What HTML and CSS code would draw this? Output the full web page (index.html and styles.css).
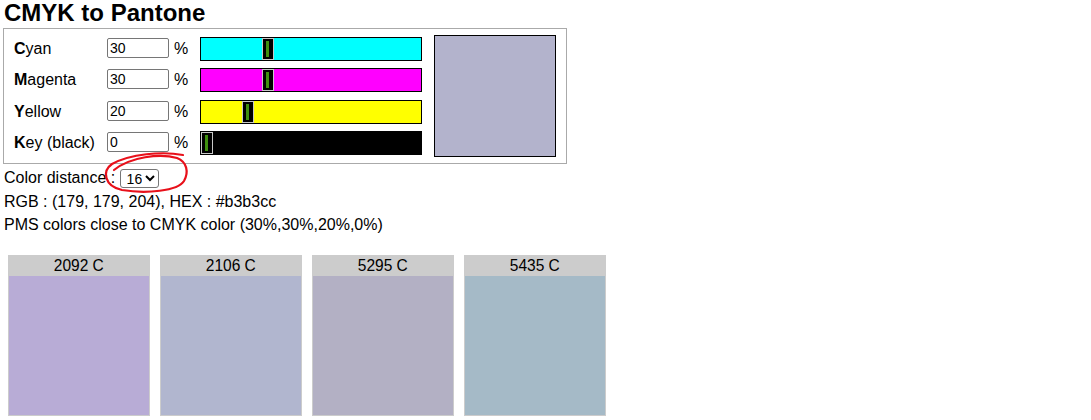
FILE: index.html
```html
<!DOCTYPE html>
<html>
<head>
<meta charset="utf-8">
<title>CMYK to Pantone</title>
<link rel="stylesheet" href="styles.css">
</head>
<body>
<h1 class="title">CMYK to Pantone</h1>
<div class="panel">
  <div class="rows">
    <div class="row">
      <span class="label"><b>C</b>yan</span>
      <input class="num" type="text" value="30">
      <span class="pct">%</span>
      <div class="slider cyan"><div class="thumb" style="left:61px"></div></div>
    </div>
    <div class="row row-wide">
      <span class="label"><b>M</b>agenta</span>
      <input class="num" type="text" value="30">
      <span class="pct">%</span>
      <div class="slider magenta"><div class="thumb" style="left:61px"></div></div>
    </div>
    <div class="row">
      <span class="label"><b>Y</b>ellow</span>
      <input class="num" type="text" value="20">
      <span class="pct">%</span>
      <div class="slider yellow"><div class="thumb" style="left:41px"></div></div>
    </div>
    <div class="row">
      <span class="label"><b>K</b>ey (black)</span>
      <input class="num" type="text" value="0">
      <span class="pct">%</span>
      <div class="slider black"><div class="thumb" style="left:0px"></div></div>
    </div>
  </div>
  <div class="preview"></div>
</div>
<div class="distance">Color distance : <select class="dist"><option>8</option><option selected>16</option><option>32</option></select></div>
<div class="line">RGB : (179, 179, 204), HEX : #b3b3cc</div>
<div class="line">PMS colors close to CMYK color (30%,30%,20%,0%)</div>
<div class="swatches">
  <div class="swatch"><div class="name"><span>2092 C</span></div><div class="chip" style="background:#b8acd6"></div></div>
  <div class="swatch"><div class="name"><span>2106 C</span></div><div class="chip" style="background:#b1b6cf"></div></div>
  <div class="swatch"><div class="name"><span>5295 C</span></div><div class="chip" style="background:#b3b0c4"></div></div>
  <div class="swatch"><div class="name"><span>5435 C</span></div><div class="chip" style="background:#a5bac7"></div></div>
</div>
<svg class="mark" width="1091" height="420" viewBox="0 0 1091 420">
  <path d="M 183 155 C 162 151, 130 154, 112 164 C 102 171, 104 186, 122 190 C 146 194, 178 191, 184 181 C 189 172, 187 162, 177 158 C 160 153, 130 157, 114 170" fill="none" stroke="#e8101a" stroke-width="2.2" stroke-linecap="round"/>
</svg>
</body>
</html>
```

FILE: styles.css
```css
html, body {
  margin: 0;
  background: #fff;
}
body {
  padding: 0 3px;
  font-family: "Liberation Sans", Arial, sans-serif;
  font-size: 16px;
  color: #000;
  position: relative;
}
.title {
  margin: 0;
  font-size: 24px;
  line-height: 25px;
  font-weight: bold;
  padding-left: 1px;
}
.panel {
  margin-top: 3px;
  display: inline-flex;
  border: 1px solid #aaa;
  padding: 6px 10px 6px 10px;
}
.rows {
  display: flex;
  flex-direction: column;
  padding-top: 2px;
}
.row {
  display: flex;
  align-items: center;
  height: 24px;
  margin-bottom: 7px;
}
.row-wide {
  margin-bottom: 8px;
}
.row:last-child {
  margin-bottom: 0;
}
.label {
  width: 93px;
  flex: none;
  white-space: nowrap;
}
.num {
  width: 62px;
  height: 20px;
  margin: 0 0 2px 0;
  box-sizing: border-box;
  border: 1px solid #767676;
  border-radius: 2px;
  padding: 1px 2px;
  font-family: "Liberation Sans", Arial, sans-serif;
  font-size: 14px;
  flex: none;
}
.pct {
  width: 26px;
  padding-left: 5px;
  flex: none;
}
.slider {
  width: 222px;
  height: 24px;
  box-sizing: border-box;
  border: 1px solid #000;
  position: relative;
  flex: none;
}
.cyan { background: #00ffff; }
.magenta { background: #ff00ff; }
.yellow { background: #ffff00; }
.black { background: #000; }
.thumb {
  position: absolute;
  top: 0;
  width: 12px;
  height: 22px;
  box-sizing: border-box;
  border: 1px solid #c8c8c8;
  background: #000;
}
.thumb::after {
  content: "";
  position: absolute;
  left: 3px;
  top: 2px;
  width: 3px;
  height: 16px;
  background: #3f8f0f;
}
.preview {
  width: 122px;
  height: 122px;
  box-sizing: border-box;
  border: 1px solid #000;
  background: #b3b3cc;
  margin-left: 12px;
}
.distance {
  margin-top: 2px;
  line-height: 24px;
  padding-left: 1px;
}
.dist {
  vertical-align: middle;
  width: 39px;
  height: 19px;
  font-family: "Liberation Sans", Arial, sans-serif;
  font-size: 14px;
  border: 1px solid #767676;
  border-radius: 3px;
  background: #fff;
  padding: 0 0 0 2px;
  margin: 0;
}
.line {
  line-height: 23px;
  padding-left: 1px;
}
.swatches {
  display: flex;
  gap: 10px;
  margin-top: 19px;
  margin-left: 5px;
}
.swatch {
  width: 142px;
  box-sizing: border-box;
  border: 1px solid #ccc;
}
.name {
  background: #ccc;
  height: 20px;
  line-height: 20px;
  text-align: center;
}
.name span {
  display: inline-block;
  transform: scaleX(0.97);
}
.chip {
  height: 139px;
}
.mark {
  position: absolute;
  left: 0;
  top: 0;
  pointer-events: none;
}
```
